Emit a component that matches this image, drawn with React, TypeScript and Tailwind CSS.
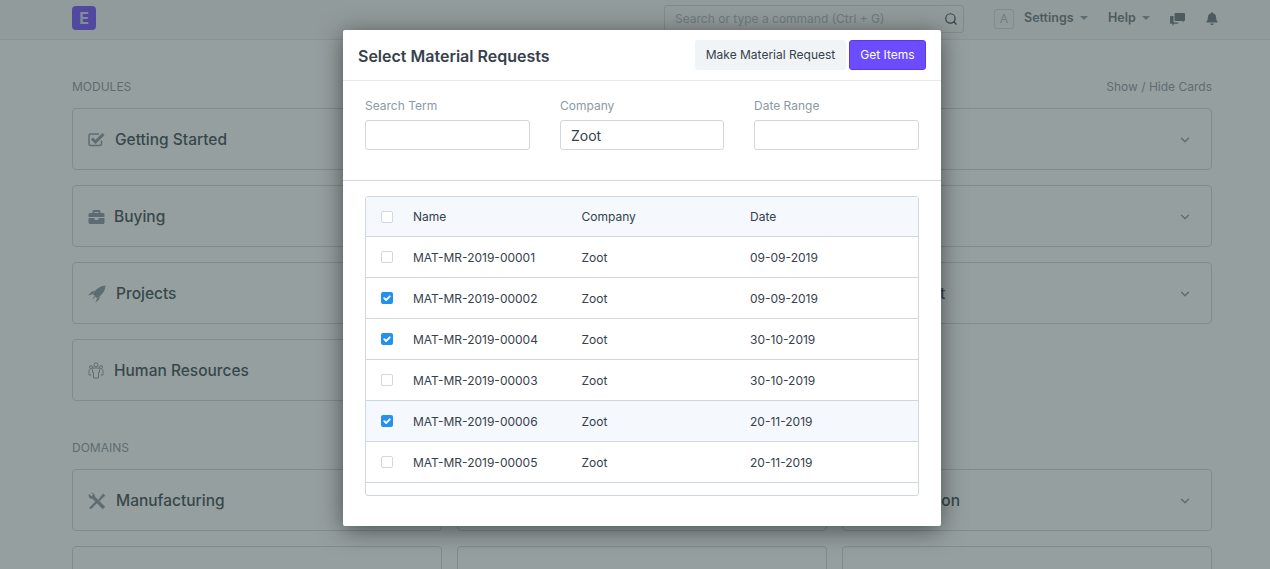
import { ChevronDown, Search } from "lucide-react";
import { FaBell, FaBriefcase } from "react-icons/fa";
import type { ReactNode } from "react";

const rows = [
    { name: "MAT-MR-2019-00001", date: "09-09-2019", checked: false },
    { name: "MAT-MR-2019-00002", date: "09-09-2019", checked: true },
    { name: "MAT-MR-2019-00004", date: "30-10-2019", checked: true },
    { name: "MAT-MR-2019-00003", date: "30-10-2019", checked: false },
    { name: "MAT-MR-2019-00006", date: "20-11-2019", checked: true, hover: true },
    { name: "MAT-MR-2019-00005", date: "20-11-2019", checked: false },
];

function CheckIcon() {
    return (
        <svg viewBox="0 0 17 15" className="w-[17px] h-[15px] text-[#8d99a6]" fill="none" stroke="currentColor">
            <path d="M13.500 8.500v3.500a1.500 1.500 0 0 1-1.500 1.500H2.500A1.500 1.500 0 0 1 1 12V3.500A1.500 1.500 0 0 1 2.500 2H11" strokeWidth="1.500" />
            <path d="M4 6.500 7.500 10 15.500 2" strokeWidth="3" />
        </svg>
    );
}

function RocketIcon() {
    return (
        <svg viewBox="0 0 18 18" className="w-[18px] h-[18px] text-[#8d99a6]" fill="currentColor">
            <path d="M17.500 0.500 16.800 4.500C15 8.500 12.500 11 9 13.200L4.800 9C6.500 5.500 9.500 3 13.500 1.200Z" />
            <path d="M6.500 5.500 4.500 9.300 0 10.400 3.500 6.800Z" />
            <path d="M12.500 11 9 13.500 7.300 18 10.800 14.600Z" />
            <path d="M6.200 11 7.200 12 4.500 14.500Z" />
        </svg>
    );
}

function PeopleIcon() {
    return (
        <svg viewBox="0 0 16 17" className="w-4 h-[17px] text-[#8d99a6]" fill="none" stroke="currentColor" strokeWidth="1">
            <circle cx="8" cy="2.800" r="2" />
            <circle cx="3" cy="5" r="1.500" />
            <circle cx="13" cy="5" r="1.500" />
            <path d="M5.500 16v-5.500H4.500V7.500C4.500 6.500 5.200 6 6 6h4c.8 0 1.500.5 1.500 1.500v3h-1V16z" />
            <path d="M1 13V8.500C1 7.500 1.500 7.200 2.500 7.200M15 13V8.500c0-1-.5-1.300-1.500-1.300M1 13h2.500M15 13h-2.500" />
        </svg>
    );
}

function ToolsIcon() {
    return (
        <svg viewBox="0 0 18 18" className="w-[18px] h-[18px] text-[#8d99a6]" fill="none" stroke="currentColor">
            <path d="M5 5 16 16" strokeWidth="3.200" />
            <path d="M5.500 2.500 3.500 4.500 1 2.300C.5 4.500 1.500 7 4.800 6.600L6.600 4.800C7 3 6 1.300 3.600.9Z" fill="currentColor" strokeWidth="0.500" />
            <path d="M2 16.500 9.500 9" strokeWidth="2.400" />
            <path d="M10.500 8 15 1.800 17 3.500 11.500 9Z" fill="currentColor" strokeWidth="0.500" />
        </svg>
    );
}

function ChatIcon() {
    return (
        <svg viewBox="0 0 15 13" className="w-[15px] h-[13px] text-[#6c7680]" fill="currentColor">
            <path d="M5.500 0h8.500a1 1 0 0 1 1 1v6a1 1 0 0 1-1 1h-.5v1.500L12 8H5.500a1 1 0 0 1-1-1V1a1 1 0 0 1 1-1z" />
            <path d="M3.500 3v5a1.500 1.500 0 0 0 1.500 1.500h3.500V10a.8.8 0 0 1-.8.8H4.500L2.500 13v-2.200H.8A.8.8 0 0 1 0 10V3.800A.8.8 0 0 1 .8 3z" />
        </svg>
    );
}

function Card({ icon, label, gap = "gap-[10px]" }: { icon?: ReactNode; label?: string; gap?: string }) {
    return (
        <div className="h-[62px] pt-[1px] border border-[#d1d8dd] rounded-[4px] flex items-center justify-between pl-[15px] pr-[19px]">
            <div className={`flex items-center ${gap} text-[15.500px] font-medium text-[#3f4f57]`}>
                {icon}
                {label}
            </div>
            <ChevronDown className="w-[14px] h-[14px] text-[#8d99a6]" strokeWidth={2.5} />
        </div>
    );
}

function CheckBox({ checked }: { checked?: boolean }) {
    if (checked) {
        return (
            <span className="w-[12px] h-[12px] rounded-[2px] bg-[#2490ef] flex items-center justify-center">
                <svg viewBox="0 0 12 12" className="w-[12px] h-[12px]" fill="none" stroke="white" strokeWidth="1.800" strokeLinecap="round" strokeLinejoin="round">
                    <path d="M3.200 6.200 5.100 8 8.800 4.300" />
                </svg>
            </span>
        );
    }
    return <span className="w-[12px] h-[12px] rounded-[2px] border border-[#d1d8dd] bg-white block" />;
}

function Field({ label, value, width }: { label: string; value?: string; width: string }) {
    return (
        <div className={width}>
            <div className="text-[12px] leading-[14px] text-[#8d99a6] mb-[7px]">{label}</div>
            <div className="h-[30px] border border-[#d1d8dd] rounded-[3px] bg-white px-[10px] flex items-center text-[14px] text-[#36414c]">{value}</div>
        </div>
    );
}

export default function App() {
    return (
        <div className="relative w-[1270px] h-[569px] overflow-hidden bg-white font-['Inter',sans-serif]">
            <header className="h-[40px] bg-[#f7f7f7] border-b border-[#e2e7ea] pl-[72px] flex items-center">
                <div className="w-[24px] h-[24px] rounded-[4px] bg-[#7452ff] text-[#d8d4f0] font-bold text-[16px] flex items-center justify-center -mt-[3px]">E</div>
                <div className="ml-[568px] w-[300px] h-[28px] -mt-[1px] border border-[#d1d8dd] rounded-[3px] flex items-center justify-between px-[10px] text-[12px] text-[#b0b8c0]">
                    <span>Search or type a command (Ctrl + G)</span>
                    <Search className="w-[14px] h-[14px] text-[#36414c] -mr-[5px]" />
                </div>
                <div className="ml-[30px] w-[20px] h-[20px] -mt-[1px] border border-[#d1d8dd] rounded-[3px] text-[12px] text-[#b0b8c0] flex items-center justify-center">A</div>
                <div className="ml-[10px] -mt-[3px] w-[84px] flex items-center gap-[6px] text-[12.500px] font-semibold text-[#6c7680]">
                    Settings
                    <span className="border-x-[4px] border-x-transparent border-t-[4px] border-t-[#8d99a6]" />
                </div>
                <div className="-mt-[3px] w-[62px] flex items-center gap-[6px] text-[12.500px] font-semibold text-[#6c7680]">
                    Help
                    <span className="border-x-[4px] border-x-transparent border-t-[4px] border-t-[#8d99a6]" />
                </div>
                <ChatIcon />
                <FaBell className="ml-[21px] -mt-[3px] w-[12px] h-[13px] text-[#6c7680]" />
            </header>

            <main className="pl-[72px] pr-[58px]">
                <div className="flex justify-between items-center pt-[41px] pb-[15px] text-[12px] leading-[12px]">
                    <span className="text-[#8d99a6] uppercase">Modules</span>
                    <span className="text-[#8d99a6]">Show / Hide Cards</span>
                </div>
                <div className="grid grid-cols-3 gap-[15px]">
                    <Card icon={<CheckIcon />} label="Getting Started" />
                    <Card />
                    <Card />
                    <Card icon={<FaBriefcase className="w-[17px] h-[16px] text-[#8d99a6]" />} label="Buying" gap="gap-[9px]" />
                    <Card />
                    <Card />
                    <Card icon={<RocketIcon />} label="Projects" />
                    <Card />
                    <Card label="Support" gap="gap-[28px]" icon={<span />} />
                    <Card icon={<PeopleIcon />} label="Human Resources" />
                    <Card />
                </div>
                <div className="pt-[41px] pb-[15px] text-[12px] leading-[12px] text-[#8d99a6] uppercase">Domains</div>
                <div className="grid grid-cols-3 gap-[15px]">
                    <Card icon={<ToolsIcon />} label="Manufacturing" />
                    <Card />
                    <Card label="Education" gap="gap-[28px]" icon={<span />} />
                    <Card />
                    <Card />
                    <Card />
                </div>
            </main>

            <div className="absolute inset-0 bg-[#2d3f3f]/50 pl-[343px] pt-[30px]">
                <div className="w-[598px] h-[496px] bg-white rounded-[2px] shadow-[0_4px_24px_rgba(0,0,0,0.5)]">
                    <div className="h-[51px] border-b border-[#e5e9ec] pl-[15px] pr-[15px] flex items-center justify-between">
                        <h1 className="text-[16px] font-semibold text-[#36414c] mt-[1px]">Select Material Requests</h1>
                        <div className="flex gap-[3px] -mt-[1px]">
                            <button className="h-[30px] w-[151px] bg-[#f0f4f7] rounded-[3px] text-[12px] text-[#36414c]">Make Material Request</button>
                            <button className="h-[30px] w-[77px] bg-[#6c4cff] border border-[#5a35f5] rounded-[3px] text-[12px] text-white">Get Items</button>
                        </div>
                    </div>
                    <div className="h-[100px] border-b border-[#d1d8dd] pl-[22px] pt-[18px] flex gap-[30px]">
                        <Field label="Search Term" width="w-[165px]" />
                        <Field label="Company" value="Zoot" width="w-[164px]" />
                        <Field label="Date Range" width="w-[165px]" />
                    </div>
                    <div className="mx-[22px] mt-[15px] h-[300px] border border-[#d1d8dd] rounded-[3px] overflow-hidden text-[12px] text-[#36414c]">
                        <div className="h-[40px] bg-[#f5f8fc] border-b border-[#d1d8dd] flex items-center pl-[15px]">
                            <CheckBox />
                            <span className="ml-[20px] w-[168.500px]">Name</span>
                            <span className="w-[168.500px]">Company</span>
                            <span>Date</span>
                        </div>
                        {rows.map((row) => (
                            <div key={row.name} className={`h-[41px] pt-[1px] border-b border-[#d1d8dd] flex items-center pl-[15px] ${row.hover ? "bg-[#f5f8fc]" : ""}`}>
                                <div className="-mt-[1px]">
                                    <CheckBox checked={row.checked} />
                                </div>
                                <span className="ml-[20px] w-[168.500px]">{row.name}</span>
                                <span className="w-[168.500px]">Zoot</span>
                                <span>{row.date}</span>
                            </div>
                        ))}
                    </div>
                </div>
            </div>
        </div>
    );
}
